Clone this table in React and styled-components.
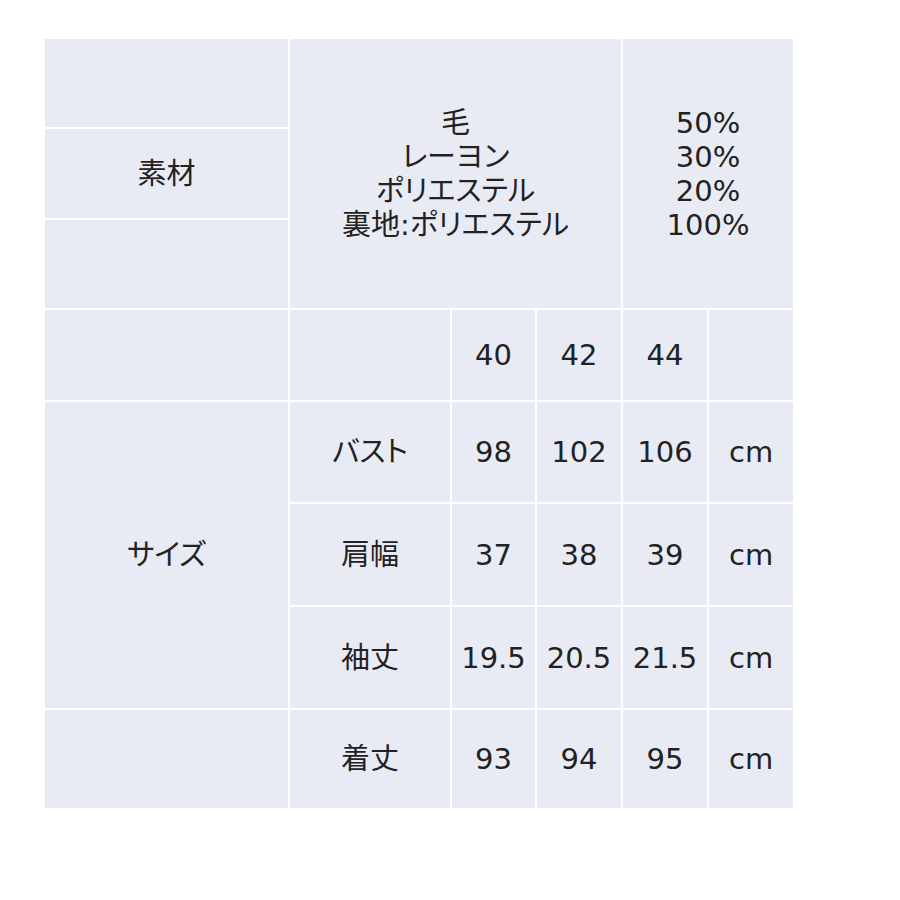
import React from "react";
import styled, { createGlobalStyle } from "styled-components";

const GlobalStyle = createGlobalStyle`
  html, body {
    margin: 0;
    padding: 0;
    background: #ffffff;
  }
  body {
    font-family: "DejaVu Sans", "Noto Sans CJK JP", sans-serif;
    color: #222222;
  }
`;

const Page = styled.div`
  width: 900px;
  height: 900px;
  padding: 37px 0 0 43px;
  box-sizing: border-box;
`;

const SpecTable = styled.table`
  border-collapse: collapse;
  table-layout: fixed;
  width: 750px;
  font-size: 29px;
  line-height: 34px;
  font-feature-settings: "palt";
`;

const Row = styled.tr`
  height: ${(p) => p.$h}px;
`;

const Cell = styled.td`
  background: #e9ebf4;
  border: 2px solid #ffffff;
  text-align: center;
  vertical-align: middle;
  padding: 0;
  white-space: nowrap;
`;

const Lines = styled.div`
  display: flex;
  flex-direction: column;
  align-items: center;
`;

const materials = ["毛", "レーヨン", "ポリエステル", "裏地:ポリエステル"];
const percents = ["50%", "30%", "20%", "100%"];

const sizes = [
  { label: "バスト", values: ["98", "102", "106"], h: 102 },
  { label: "肩幅", values: ["37", "38", "39"], h: 103 },
  { label: "袖丈", values: ["19.5", "20.5", "21.5"], h: 103 },
];

export default function App() {
  return (
    <>
      <GlobalStyle />
      <Page>
        <SpecTable>
          <colgroup>
            <col style={{ width: 245 }} />
            <col style={{ width: 162 }} />
            <col style={{ width: 85 }} />
            <col style={{ width: 86 }} />
            <col style={{ width: 86 }} />
            <col style={{ width: 86 }} />
          </colgroup>
          <tbody>
            <Row $h={90}>
              <Cell />
              <Cell colSpan={3} rowSpan={3}>
                <Lines>
                  {materials.map((m) => (
                    <span key={m}>{m}</span>
                  ))}
                </Lines>
              </Cell>
              <Cell colSpan={2} rowSpan={3}>
                <Lines>
                  {percents.map((p) => (
                    <span key={p}>{p}</span>
                  ))}
                </Lines>
              </Cell>
            </Row>
            <Row $h={91}>
              <Cell>素材</Cell>
            </Row>
            <Row $h={90}>
              <Cell />
            </Row>
            <Row $h={92}>
              <Cell />
              <Cell />
              <Cell>40</Cell>
              <Cell>42</Cell>
              <Cell>44</Cell>
              <Cell />
            </Row>
            {sizes.map((s, i) => (
              <Row $h={s.h} key={s.label}>
                {i === 0 && <Cell rowSpan={3}>サイズ</Cell>}
                <Cell>{s.label}</Cell>
                {s.values.map((v) => (
                  <Cell key={v}>{v}</Cell>
                ))}
                <Cell>cm</Cell>
              </Row>
            ))}
            <Row $h={100}>
              <Cell />
              <Cell>着丈</Cell>
              <Cell>93</Cell>
              <Cell>94</Cell>
              <Cell>95</Cell>
              <Cell>cm</Cell>
            </Row>
          </tbody>
        </SpecTable>
      </Page>
    </>
  );
}
